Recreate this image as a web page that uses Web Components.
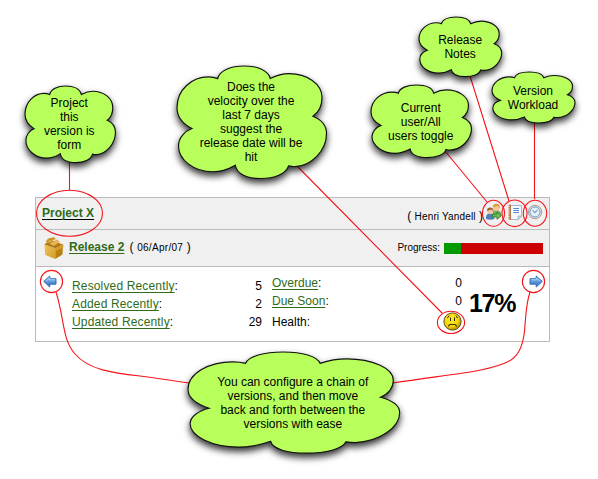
<!DOCTYPE html>
<html lang="en"><head><meta charset="utf-8"><title>Project version panel</title>
<style>
html,body{margin:0;background:#fff}
body{width:598px;height:479px;overflow:hidden;font:12px/14px "Liberation Sans",Arial,sans-serif;color:#000}
</style></head><body>
<version-diagram></version-diagram>
<script>
const define=(name,markup,setup)=>customElements.define(name,class extends HTMLElement{
 constructor(){super();this.attachShadow({mode:'open'}).innerHTML=markup}
 connectedCallback(){if(setup)setup(this,this.shadowRoot)}
});

const icons={
box:`<svg width="22" height="24" viewBox="0 0 22 24"><defs><linearGradient id="a" x2="1" y2="1"><stop stop-color="#f0c55c"/><stop offset="1" stop-color="#d19a2b"/></linearGradient></defs>
<path d="M1.3 8.5L12.3 12.2V23L2.3 19Z" fill="url(#a)"/><path d="M12.3 12.2L20 8.5L19.5 18.6L12.3 23Z" fill="#b9800f"/><path d="M1.3 8.5L7 4L20 8.5L12.3 12.2Z" fill="#b17a17"/><path d="M2.5 5.5L5 2.5L11 1L13 3L6.5 7Z" fill="#dba941"/><path d="M4 5.5L6 3.5L11 2.3" stroke="#a9761a" fill="none" stroke-width=".8"/><path d="M6.5 7.5L14 3.4L17 6L10.5 10Z" fill="#e5b653"/><path d="M12.3 12.2L20.5 8.5L20.2 11.5L12.8 15Z" fill="#d59f2b"/></svg>`,
left:`<svg width="14" height="13" viewBox="0 0 14 13"><defs><linearGradient id="a" x2="0" y2="1"><stop stop-color="#9ccbf5"/><stop offset="1" stop-color="#2467bd"/></linearGradient></defs><path d="M.7 6.4L6.8 1V3.7H13V9.2H6.8V12Z" fill="url(#a)" stroke="#2c65ae" stroke-width=".9"/><path d="M3 6L6.5 3.2V4.8H12" fill="none" stroke="#b4d9ff" stroke-width=".8"/></svg>`,
users:`<svg width="18" height="18" viewBox="0 0 18 18"><path d="M7.5 10Q7.5 6.8 11.5 7Q16.5 7 16.5 13H11Z" fill="#7fa968"/><circle cx="11.3" cy="4.5" r="3.4" fill="#f2c795"/><path d="M7.8 5Q7.4 1 11.3.8Q15.2 1 14.8 5.5Q13.5 4 12.5 2.8Q10.5 4 7.8 4Z" fill="#df9e35"/><path d="M1 16Q.5 10.3 5 10.2Q9.5 10.3 9.5 16Q5 17.5 1 16Z" fill="#4f80b9"/><circle cx="5.2" cy="7.9" r="3" fill="#f0c49c"/><path d="M2 8Q1.8 4.4 5.2 4.5Q8.5 4.5 8.3 8Q7 7.3 6 6.2Q4.5 7.3 2 8Z" fill="#9b6130"/><path d="M7.5 11H12V8.8L16.5 12.5L12 16.3V14H7.5Z" fill="#72b84f" stroke="#2f7f2b" stroke-width=".9"/></svg>`,
notes:`<svg width="16" height="17" viewBox="0 0 16 17"><path d="M3 1.5H14.5V12L11 15.5H3Z" fill="#f8faff" stroke="#a9b5ca"/><path d="M11 15.5V12H14.5Z" fill="#d3dae6" stroke="#9ca9bd" stroke-width=".7"/><path d="M1.6.7H4V16H1.6Z" fill="#b8784f"/><path d="M.7 2.5H2.6M.7 5H2.6M.7 7.5H2.6M.7 10H2.6M.7 12.5H2.6M.7 15H2.6" stroke="#f6e6d8"/><path d="M6.3 4.5H12M6.3 6.500H12M6.3 8.500H12" stroke="#568ad0" stroke-width="1.1"/></svg>`,
clock:`<svg width="16" height="16" viewBox="0 0 16 16"><circle cx="8" cy="8" r="6.7" fill="#e5e1da" stroke="#a59e95" stroke-width="1"/><circle cx="8" cy="8" r="5" fill="#e4f0fc" stroke="#6d9ccc" stroke-width="1"/><path d="M5.8 6.3L7.7 8.7L10.7 6" fill="none" stroke="#4d6f98" stroke-width="1"/></svg>`,
sad:`<svg width="19" height="19" viewBox="0 0 19 19"><defs><radialGradient id="a" cx=".4" cy=".35" r=".65"><stop stop-color="#fff02a"/><stop offset=".7" stop-color="#f0d010"/><stop offset="1" stop-color="#b78e00"/></radialGradient></defs><circle cx="9.5" cy="9.5" r="8.6" fill="url(#a)" stroke="#5a4a10" stroke-width="1"/><path d="M7.5 5.500V9M11.500 5.500V9" stroke="#292100" stroke-width="1"/><path d="M4.3 6.2L6.2 3.5M14.700 6.2L12.8 3.5M5.500 14.5V13.500H6.500V12.500H12.500V13.500H13.500V14.5" fill="none" stroke="#292100" stroke-width=".9"/></svg>`};
icons.right=icons.left.replace('<svg','<svg style="transform:scaleX(-1)"');
define('ui-icon','<style>:host{display:block;flex:none}svg{display:block}</style><span></span>',(e,r)=>r.querySelector('span').innerHTML=icons[e.getAttribute('name')]);

define('text-link','<style>:host{display:inline}span{color:#2f6b1a;text-decoration:underline;text-decoration-thickness:1px;text-underline-offset:2px}:host([strong]) span{font-weight:bold;text-decoration-thickness:var(--rule,1px);text-decoration-color:var(--line,currentColor)}</style><span><slot></slot></span>');

define('progress-bar','<style>:host{display:flex;width:99px;height:11px;background:#c00}i{width:17%;background:#090}</style><i></i>');

define('panel-row','<style>:host{display:flex;align-items:center;box-sizing:border-box;background:#f0f0f0;border-bottom:1px solid #bbb}</style><slot></slot>');

define('version-panel',`<style>
:host{display:block;box-sizing:border-box;width:515px;height:145px;border:1px solid #bbb;border-bottom:0;background:#fff}
.head{height:32px;padding:0 6px 0 6px}.release{height:37px;padding:0 6px 0 7px}.body{height:75px;background:#fff;align-items:flex-start;padding:0 6px 0 7px}
.grow{flex:1}.small{font-size:10px;letter-spacing:.15px}.owner{margin:6px 2px 0 0}.tools{display:flex;gap:4px;align-items:center;margin-bottom:3px}
.project{margin-bottom:1px}.title{margin:0 0 2px 4px}.date{margin:0 0 1px 5px;letter-spacing:.2px}.date .small{letter-spacing:.3px}.progress{margin-right:4px;letter-spacing:-.03px}
.stats{display:grid;grid-template-columns:154px 36px;grid-auto-rows:18px;line-height:18px;margin:10px 0 0 15px}
.stats span{letter-spacing:.15px}
.stats b{font-weight:normal;text-align:right}.more{display:grid;grid-template-columns:164px 26px;grid-template-rows:18px 21px 18px;line-height:18px;margin:7px 0 0 10px}
.more b{font-weight:normal;text-align:right}.more ui-icon{justify-self:end;margin:-1px 0 0 0}
.percent{font:bold 25px/30px "Liberation Sans",Arial,sans-serif;letter-spacing:-1.3px;margin:21px 0 0 7px;width:48px}
.nav{margin-top:8px}
</style>
<panel-row class="head"><text-link class="project" strong style="--rule:1px;--line:#000">Project X</text-link><span class="grow"></span><span class="owner">( <span class="small">Henri Yandell</span> )</span><div class="tools"><ui-icon name="users"></ui-icon><ui-icon name="notes"></ui-icon><ui-icon name="clock"></ui-icon></div></panel-row>
<panel-row class="release"><ui-icon name="box"></ui-icon><text-link class="title" strong>Release 2</text-link><span class="date">( <span class="small">06/Apr/07</span> )</span><span class="grow"></span><span class="small progress">Progress:</span><progress-bar></progress-bar></panel-row>
<panel-row class="body"><ui-icon class="nav" name="left"></ui-icon>
<div class="stats"><span><text-link>Resolved Recently</text-link>:</span><b>5</b><span><text-link>Added Recently</text-link>:</span><b>2</b><span><text-link>Updated Recently</text-link>:</span><b>29</b></div>
<div class="more"><span><text-link>Overdue</text-link>:</span><b>0</b><span><text-link>Due Soon</text-link>:</span><b>0</b><span>Health:</span><ui-icon name="sad"></ui-icon></div>
<span class="percent">17%</span><span class="grow"></span><ui-icon class="nav" name="right"></ui-icon></panel-row>`);

define('cloud-note',`<style>
:host{position:absolute;display:grid;place-items:center;text-align:center;line-height:14px;white-space:nowrap}
svg{position:absolute;inset:0;width:100%;height:100%;overflow:visible;filter:drop-shadow(0 4px 3.5px rgba(0,0,0,.8))}
path{fill:#b8ff5c;stroke:#111;stroke-width:1.15;vector-effect:non-scaling-stroke}
span{position:relative}</style>
<svg viewBox="0 0 100 100" preserveAspectRatio="none"><path d="M10 55.6C3.5 51 0 45 0 37C0 21 10 9.7 21 9.7C23.5 9.7 25.5 10.2 27.2 11.2C28.5 4 36 0 45 0C54 0 61 4 62.4 11.2C67 8 71 6.8 75 6.8C87 6.8 97 16 97 28C97 36 95 41 90.9 44.7C97 48 100 53 100 60C100 75 90 88.8 79 89.5C77 89.6 76 89.3 74.6 88.8C73 96 65 100 56 100C47 100 40 96 39 88.2C34 92 29 94 24 94C11 94 1 83 1 71C1 64 5 58 10 55.6Z"/></svg><span><slot></slot></span>`,
(e,r)=>{const[x,y,w,h,dx=0,dy=0]=e.getAttribute('box').split(' ').map(Number);e.style.cssText=`left:${x}px;top:${y}px;width:${w}px;height:${h}px`;r.querySelector('span').style.transform=`translate(${dx}px,${dy}px)`});

define('callout-lines',`<style>:host{position:absolute;inset:0;pointer-events:none}svg{display:block}</style>
<svg width="598" height="479" fill="none" stroke="#f5141b" stroke-width="1.1">
<path d="M69.5 163V190M297 166L442.500 313.500M445 151L487 202M470 76L509 201M534.500 123V199"/>
<path d="M56 292C65 321 62 339 75 354C89 370 113 373 140 376C158 378 174 381 189 383M530 292C526 304 526 315 525 325C524 345 519 355 511 360C490 372 450 374 393 383"/>
<ellipse cx="69.500" cy="213.300" rx="33" ry="23"/><circle cx="51.500" cy="281.500" r="11.100"/><circle cx="533.500" cy="281.500" r="11.100"/>
<ellipse cx="451" cy="322.400" rx="13.600" ry="11.100"/><ellipse cx="493.500" cy="213.300" rx="11" ry="13"/><ellipse cx="514.500" cy="213.300" rx="12.500" ry="13.300"/><ellipse cx="535" cy="213.300" rx="11.700" ry="13"/>
</svg>`);

define('version-diagram',`<style>:host{display:block;position:relative;box-sizing:border-box;width:598px;height:479px;padding:197px 0 0 35px}</style>
<version-panel></version-panel><callout-lines></callout-lines>
<cloud-note box="24.5 86 90.5 76.7 -.5 -.5">Project<br>this<br>version is<br>form</cloud-note>
<cloud-note box="176.800 65.800 149.500 112.500 -.5 0">Does the<br>velocity over the<br>last 7 days<br>suggest the<br>release date will be<br>hit</cloud-note>
<cloud-note box="371 85.300 100.500 72.700 -.5 0">Current<br>user/All<br>users toggle</cloud-note>
<cloud-note box="419.300 17.300 82.700 59.700 -.5 0">Release<br>Notes</cloud-note>
<cloud-note box="492 72.300 83 51 -.5 0">Version<br>Workload</cloud-note>
<cloud-note box="188 352.300 211.700 101.200 -1 0">You can configure a chain of<br>versions, and then move<br>back and forth between the<br>versions with ease</cloud-note>`);
</script></body></html>
